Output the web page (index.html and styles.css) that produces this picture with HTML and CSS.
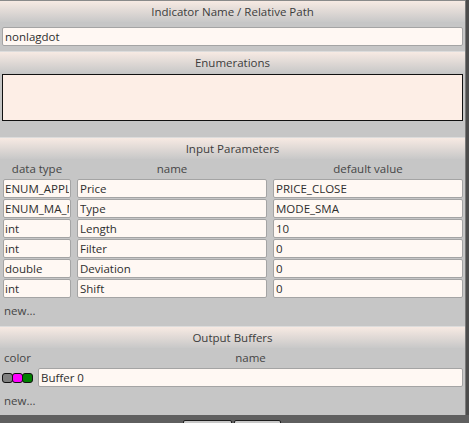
FILE: index.html
```html
<!DOCTYPE html>
<html lang="en">

<head>
    <meta charset="UTF-8">
    <title>Indicator</title>
    <link rel="stylesheet" href="styles.css">
</head>

<body>

    <div id="window">
        <div id="panel">

            <div class="section first">
                <div class="section-head">Indicator Name / Relative Path</div>
                <div class="name-row">
                    <input class="field" type="text" value="nonlagdot">
                </div>
            </div>

            <div class="section">
                <div class="section-head">Enumerations</div>
                <div class="enum-row">
                    <textarea class="enum-box"></textarea>
                </div>
            </div>

            <div class="section">
                <div class="section-head">Input Parameters</div>
                <div class="param-grid">
                    <div class="col-label">data type</div>
                    <div class="col-label">name</div>
                    <div class="col-label">default value</div>

                    <input class="field type" type="text" value="ENUM_APPLIED_PRICE">
                    <input class="field" type="text" value="Price">
                    <input class="field" type="text" value="PRICE_CLOSE">

                    <input class="field type" type="text" value="ENUM_MA_METHOD">
                    <input class="field" type="text" value="Type">
                    <input class="field" type="text" value="MODE_SMA">

                    <input class="field type" type="text" value="int">
                    <input class="field" type="text" value="Length">
                    <input class="field" type="text" value="10">

                    <input class="field type" type="text" value="int">
                    <input class="field" type="text" value="Filter">
                    <input class="field" type="text" value="0">

                    <input class="field type" type="text" value="double">
                    <input class="field" type="text" value="Deviation">
                    <input class="field" type="text" value="0">

                    <input class="field type" type="text" value="int">
                    <input class="field" type="text" value="Shift">
                    <input class="field" type="text" value="0">
                </div>
                <div class="new-link params">new...</div>
            </div>

            <div class="section">
                <div class="section-head">Output Buffers</div>
                <div class="buffer-grid">
                    <div class="col-label left">color</div>
                    <div class="col-label">name</div>

                    <div class="swatches">
                        <span class="swatch gray"></span>
                        <span class="swatch magenta"></span>
                        <span class="swatch green"></span>
                    </div>
                    <input class="field" type="text" value="Buffer 0">
                </div>
                <div class="new-link">new...</div>
            </div>

        </div>
        <div id="side-strip"></div>
    </div>

    <!-- dialog buttons, only their top edge shows -->
    <div id="bottom-bar">
        <button class="dlg-button"></button>
        <button class="dlg-button"></button>
    </div>

</body>

</html>
```

FILE: styles.css
```css
body, html {
    margin: 0;
    padding: 0;
    height: 100%;
    overflow: hidden;
    background-color: #5f5f5f;
    font-family: 'Open Sans', 'Noto Sans', sans-serif;
    font-size: 11.5px;
    color: #404040;
}

#window {
    display: flex;
    height: 415px;
}

#panel {
    width: 465px;
    background-color: #c6c6c6;
    display: flex;
    flex-direction: column;
}

#side-strip {
    flex: 1;
    background-color: #4c4c4c;
    border-left: 1px solid #7a7a7a;
}

.section {
    border-top: 1px solid #dcdcdc;
}

.section.first {
    border-top-color: #8a8a8a;
}

.section-head {
    height: 21px;
    line-height: 21px;
    text-align: center;
    color: #3c3c3c;
    background: linear-gradient(to bottom, #f7eae3, #c8c8c8);
}

.field {
    box-sizing: border-box;
    height: 19px;
    margin: 0;
    padding: 0 2px;
    border: 1px solid #a4a4a4;
    border-radius: 2px;
    background-color: #fff8f3;
    font-family: inherit;
    font-size: 11.5px;
    color: #2e2e2e;
    outline: none;
    min-width: 0;
    width: 100%;
}

    .field.type {
        padding: 0 1px;
    }

.name-row {
    padding: 5px 2px 5px 2px;
    display: flex;
}

.enum-row {
    padding: 1px 2px 16px 2px;
    display: flex;
}

.enum-box {
    box-sizing: border-box;
    width: 100%;
    height: 47px;
    margin: 0;
    border: 1px solid #111;
    background-color: #fdeee6;
    resize: none;
    outline: none;
}

.param-grid {
    display: grid;
    grid-template-columns: 68px 1fr 1fr;
    column-gap: 6px;
    row-gap: 1px;
    padding: 0 2px 0 3px;
}

.col-label {
    height: 19px;
    line-height: 19px;
    text-align: center;
    color: #454545;
}

    .col-label.left {
        text-align: left;
        padding-left: 2px;
    }

.new-link {
    height: 22px;
    line-height: 28px;
    padding-left: 4px;
    color: #454545;
}

    .new-link.params {
        height: 28px;
        line-height: 26px;
    }

.buffer-grid {
    display: grid;
    grid-template-columns: 31px 1fr;
    column-gap: 5px;
    row-gap: 1px;
    padding: 0 2px 0 2px;
}

.swatches {
    display: flex;
    align-items: center;
    padding-top: 1px;
}

.swatch {
    box-sizing: border-box;
    width: 11px;
    height: 10px;
    border: 1px solid #111;
    border-radius: 3px;
    margin-right: -1px;
}

    .swatch.gray {
        background-color: #808080;
    }

    .swatch.magenta {
        background-color: #ff00ff;
    }

    .swatch.green {
        background-color: #008000;
    }

#bottom-bar {
    height: 8px;
    overflow: hidden;
    padding-left: 183px;
    display: flex;
    gap: 2px;
    align-items: flex-start;
}

.dlg-button {
    margin-top: 5px;
    width: 49px;
    height: 22px;
    border: 1px solid #1e1e1e;
    border-radius: 2px;
    background-color: #c8c8c8;
}

    .dlg-button + .dlg-button {
        width: 47px;
    }
```
